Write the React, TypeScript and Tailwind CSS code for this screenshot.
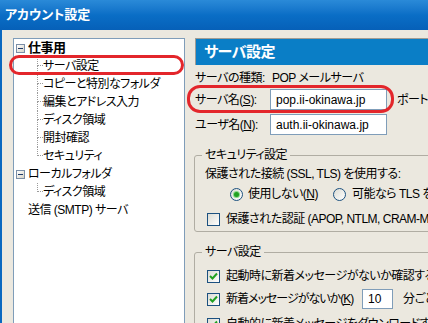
import React from 'react';

const FONT = "font-['Liberation_Sans','Noto_Sans_CJK_JP',sans-serif] [font-feature-settings:'palt']";

function Minus() {
  return (
    <div className="w-[9px] h-[9px] shrink-0 border border-[#7a8ea7] bg-gradient-to-br from-white to-[#d6d3c8] flex items-center justify-center">
      <div className="w-[5px] h-[1px] bg-[#1d3a6a]" />
    </div>
  );
}

function Child({ label, last }: { label: string; last?: boolean }) {
  return (
    <div className="flex h-[18px] items-center">
      <div className="w-[23px] h-full" />
      <div className="w-[6px] h-full flex flex-col">
        <div className="h-[9px] border-l border-b border-dotted border-[#9a9a9a]" />
        <div className={last ? 'h-[9px]' : 'h-[9px] border-l border-dotted border-[#9a9a9a]'} />
      </div>
      <span className="whitespace-nowrap">{label}</span>
    </div>
  );
}

function Parent({ label, bold }: { label: string; bold?: boolean }) {
  return (
    <div className="flex h-[18px] items-center pl-[2px]">
      <Minus />
      <span className={bold ? 'ml-[3px] font-bold text-[13px]' : 'ml-[3px]'}>{label}</span>
    </div>
  );
}

function Tree() {
  return (
    <div className="ml-[11px] mt-[8px] w-[172px] h-[300px] shrink-0 border border-[#7f9db9] bg-white">
      <Parent label="仕事用" bold />
      <Child label="サーバ設定" />
      <Child label="コピーと特別なフォルダ" />
      <Child label="編集とアドレス入力" />
      <Child label="ディスク領域" />
      <Child label="開封確認" />
      <Child label="セキュリティ" last />
      <Parent label="ローカルフォルダ" />
      <Child label="ディスク領域" last />
      <div className="flex h-[18px] items-center pl-[14px] whitespace-nowrap">送信 (SMTP) サーバ</div>
    </div>
  );
}

function Check() {
  return (
    <div className="w-[13px] h-[13px] shrink-0 border border-[#1c5180] bg-gradient-to-br from-[#dcdcd4] to-white flex items-center justify-center">
      <svg width="9" height="9" viewBox="0 0 9 9">
        <path d="M1 4 L3.5 6.5 L8 1.5" fill="none" stroke="#21a121" strokeWidth="2" />
      </svg>
    </div>
  );
}

function Box() {
  return <div className="w-[13px] h-[13px] shrink-0 border border-[#1c5180] bg-gradient-to-br from-[#dcdcd4] to-white" />;
}

function Radio({ on }: { on?: boolean }) {
  return (
    <div className="w-[13px] h-[13px] shrink-0 rounded-full border border-[#1c5180] bg-gradient-to-br from-[#dcdcd4] to-white flex items-center justify-center">
      {on && <div className="w-[5px] h-[5px] rounded-full bg-[#21a121] shadow-[0_0_0_1px_#8ad88a]" />}
    </div>
  );
}

function Right() {
  return (
    <div className="ml-[10px] w-[300px] shrink-0">
      <div className="mt-[8px] h-[27px] border-t border-l border-[#a09c94] bg-[#0a7ec6] flex items-center pl-[8px] text-white font-bold text-[15px]">
        サーバ設定
      </div>
      <div className="mt-[4px] h-[18px] flex items-center whitespace-nowrap">
        <span className="w-[77px]">サーバの種類:</span>
        <span>POP メールサーバ</span>
      </div>
      <div className="mt-[2px] h-[21px] flex items-center whitespace-nowrap">
        <span className="w-[75px]">
          サーバ名(<span className="underline">S</span>):
        </span>
        <div className="w-[117px] h-[21px] border border-[#7f9db9] bg-white flex items-center pl-[5px] tracking-normal">pop.ii-okinawa.jp</div>
        <span className="ml-[10px]">ポートの</span>
      </div>
      <div className="mt-[4px] h-[21px] flex items-center whitespace-nowrap">
        <span className="w-[75px]">
          ユーザ名(<span className="underline">N</span>):
        </span>
        <div className="w-[117px] h-[21px] border border-[#7f9db9] bg-white flex items-center pl-[5px] tracking-normal">auth.ii-okinawa.jp</div>
      </div>

      <fieldset className="mt-[13px] -ml-[1px] border border-[#b0ada3] rounded-[3px] pb-[3px] whitespace-nowrap">
        <legend className="ml-[7px] px-[3px] h-[14px] leading-[14px]">セキュリティ設定</legend>
        <div className="mt-[3px] h-[18px] flex items-center pl-[10px]">保護された接続 (SSL, TLS) を使用する:</div>
        <div className="mt-[2px] h-[18px] flex items-center pl-[35px]">
          <div className="w-[103px] flex items-center">
            <Radio on />
            <span className="ml-[5px]">
              使用しない(<span className="underline">N</span>)
            </span>
          </div>
          <Radio />
          <span className="ml-[6px]">可能なら TLS を使用する</span>
        </div>
        <div className="mt-[7px] h-[18px] flex items-center pl-[12px]">
          <Box />
          <span className="ml-[6px]">保護された認証 (APOP, NTLM, CRAM-MD5) を使用する</span>
        </div>
      </fieldset>

      <fieldset className="mt-[13px] -ml-[1px] border border-[#b0ada3] rounded-[3px] pb-[3px] whitespace-nowrap">
        <legend className="ml-[7px] px-[3px] h-[14px] leading-[14px]">サーバ設定</legend>
        <div className="mt-[8px] h-[18px] flex items-center pl-[12px]">
          <Check />
          <span className="ml-[6px]">起動時に新着メッセージがないか確認する(I)</span>
        </div>
        <div className="mt-[4px] h-[20px] flex items-center pl-[12px]">
          <Check />
          <span className="ml-[6px] w-[136px] tracking-[-1px]">
            新着メッセージがないか(<span className="underline">K</span>)
          </span>
          <div className="w-[31px] h-[20px] border border-[#7f9db9] bg-white flex items-center pl-[5px] tracking-normal">10</div>
          <span className="ml-[10px]">分ごとに確認する</span>
        </div>
        <div className="mt-[6px] h-[18px] flex items-center pl-[12px]">
          <Check />
          <span className="ml-[6px]">自動的に新着メッセージをダウンロードする(M)</span>
        </div>
      </fieldset>
    </div>
  );
}

export default function App() {
  return (
    <div className={`relative w-[428px] h-[323px] overflow-hidden bg-[#ebe8df] text-[12px] leading-[14px] tracking-[-0.5px] text-black ${FONT}`}>
      <div className="h-[30px] bg-gradient-to-b from-[#2a8ad8] via-[#0a6ec6] to-[#0660b8] flex items-center pl-[5px] text-white text-[13px] font-bold tracking-normal">
        アカウント設定
      </div>
      <div className="flex h-[293px] border-l-2 border-[#0a68c0]">
        <Tree />
        <Right />
      </div>
      <div className="absolute left-[9px] top-[55px] w-[175px] h-[20px] rounded-[10px] border-[3px] border-[#e3262b]" />
      <div className="absolute left-[187px] top-[85px] w-[207px] h-[28px] rounded-[13px] border-[3px] border-[#e3262b]" />
    </div>
  );
}
